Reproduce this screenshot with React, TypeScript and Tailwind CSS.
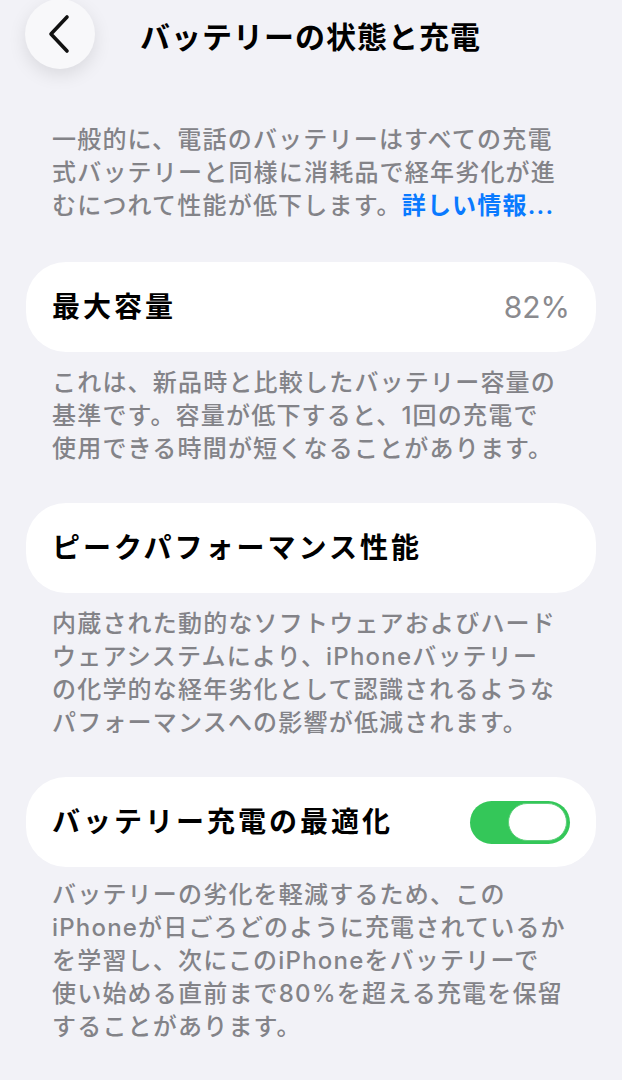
const FONT = { fontFamily: '"Inter", "Noto Sans CJK JP", sans-serif' };

function Lines({ lines }: { lines: React.ReactNode[] }) {
  return (
    <div className="px-[26px] text-[24px] font-medium leading-[33px] tracking-[1.2px] text-[#838388]">
      {lines.map((l, i) => (
        <div key={i} className="whitespace-nowrap">
          {l}
        </div>
      ))}
    </div>
  );
}

function Card({ children }: { children: React.ReactNode }) {
  return (
    <div className="flex h-[90px] items-center justify-between rounded-[40px] bg-white px-[26px]">
      {children}
    </div>
  );
}

function Label({ children }: { children: React.ReactNode }) {
  return (
    <span className="text-[28px] font-bold tracking-[3px] text-black">{children}</span>
  );
}

function Toggle() {
  return (
    <div className="flex h-[43px] w-[100px] items-center justify-end rounded-full bg-[#34c759] pr-[3px]">
      <div className="h-[38px] w-[59px] rounded-full border border-[#5fcf7b] bg-white" />
    </div>
  );
}

export default function App() {
  return (
    <div className="min-h-[1080px] w-[622px] overflow-hidden bg-[#f2f2f7]" style={FONT}>
      <header className="flex h-[70px] items-center">
        <button className="ml-[25px] -mt-[2px] flex h-[70px] w-[70px] items-center justify-center rounded-full bg-[#f8f8fa] shadow-[0_6px_18px_rgba(0,0,0,0.10)]">
          <svg width="26" height="40" viewBox="0 0 26 40" fill="none">
            <path
              d="M20 3 L4 20 L20 37"
              stroke="#111"
              strokeWidth="3.6"
              strokeLinecap="round"
              strokeLinejoin="round"
            />
          </svg>
        </button>
        <h1 className="ml-[45px] mt-[4px] text-[30px] font-bold tracking-[1px] text-black">
          バッテリーの状態と充電
        </h1>
      </header>

      <div className="px-[26px] pt-[53px]">
        <Lines
          lines={[
            "一般的に、電話のバッテリーはすべての充電",
            "式バッテリーと同様に消耗品で経年劣化が進",
            <>
              むにつれて性能が低下します。
              <span className="font-semibold text-[#0a7aff]">詳しい情報...</span>
            </>,
          ]}
        />

        <div className="mt-[40px]">
          <Card>
            <Label>最大容量</Label>
            <span className="text-[30px] text-[#8a8a8e]">82%</span>
          </Card>
        </div>

        <div className="mt-[14px]">
          <Lines
            lines={[
              "これは、新品時と比較したバッテリー容量の",
              "基準です。容量が低下すると、1回の充電で",
              "使用できる時間が短くなることがあります。",
            ]}
          />
        </div>

        <div className="mt-[38px]">
          <Card>
            <Label>ピークパフォーマンス性能</Label>
          </Card>
        </div>

        <div className="mt-[14px]">
          <Lines
            lines={[
              "内蔵された動的なソフトウェアおよびハード",
              "ウェアシステムにより、iPhoneバッテリー",
              "の化学的な経年劣化として認識されるような",
              "パフォーマンスへの影響が低減されます。",
            ]}
          />
        </div>

        <div className="mt-[38px]">
          <Card>
            <Label>バッテリー充電の最適化</Label>
            <Toggle />
          </Card>
        </div>

        <div className="mt-[11px]">
          <Lines
            lines={[
              "バッテリーの劣化を軽減するため、この",
              "iPhoneが日ごろどのように充電されているか",
              "を学習し、次にこのiPhoneをバッテリーで",
              "使い始める直前まで80%を超える充電を保留",
              "することがあります。",
            ]}
          />
        </div>
      </div>
    </div>
  );
}
